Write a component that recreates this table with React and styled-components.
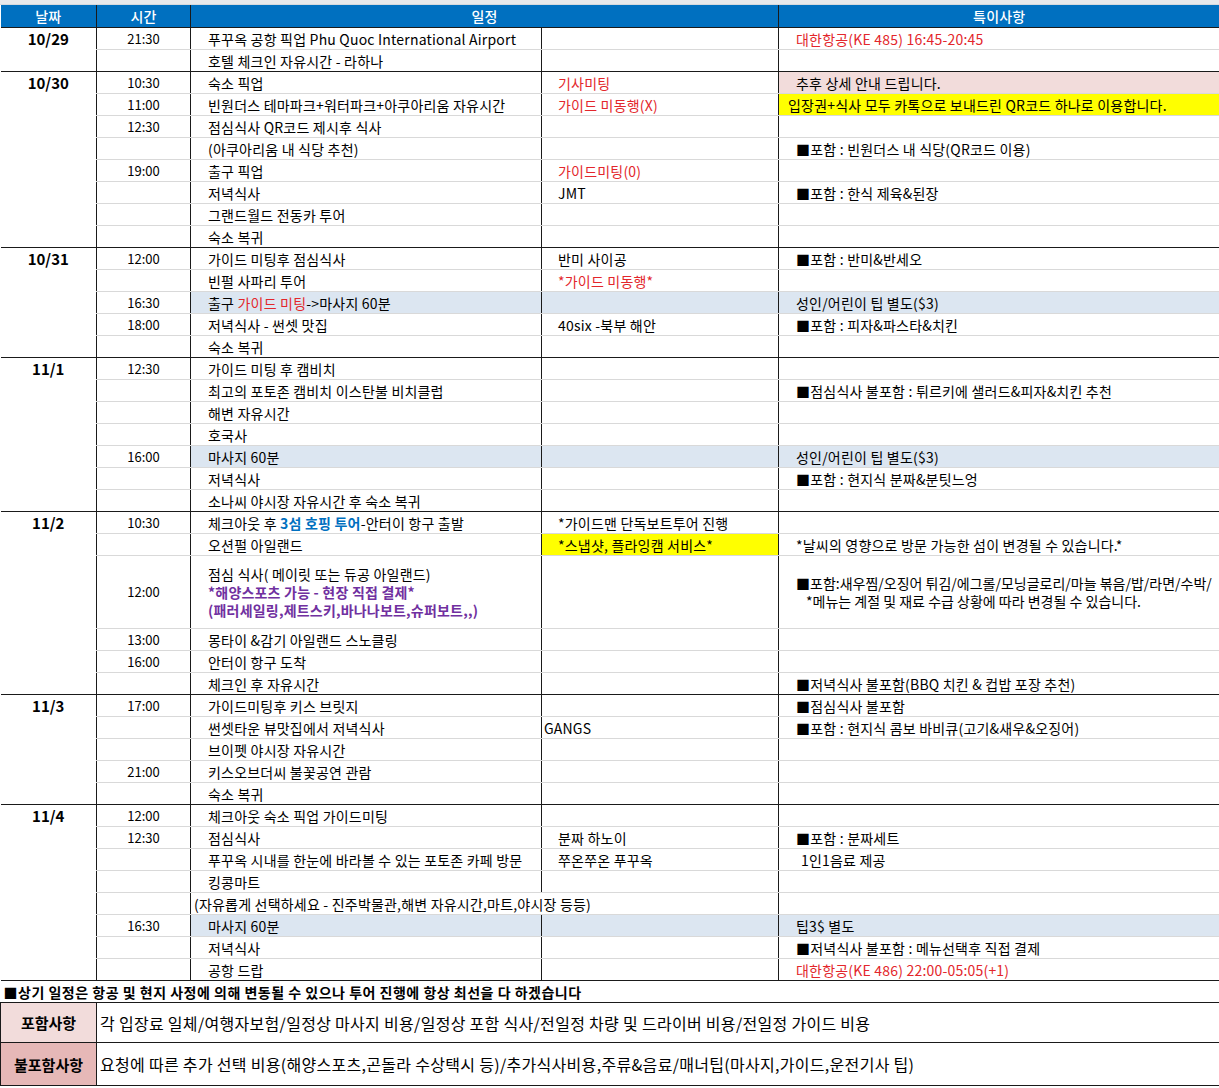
import React from "react";
import styled, { createGlobalStyle, css } from "styled-components";

const GlobalStyle = createGlobalStyle`
  body {
    margin: 0;
    background: #ffffff;
    font-family: "Noto Sans CJK KR", "Noto Sans", sans-serif;
    color: #000;
  }
`;

const Page = styled.div`
  width: 1219px;
`;

const TopStrip = styled.div`
  height: 4px;
  background: #e7e9ec;
  border-bottom: 1px solid #d6d9dd;
`;

const Table = styled.table`
  width: 1219px;
  border-collapse: collapse;
  table-layout: fixed;
  font-size: 14px;
  letter-spacing: 0.2px;
`;

const HeadCell = styled.th`
  height: 22px;
  padding: 0;
  background: #0070c0;
  color: #fff;
  font-weight: 500;
  font-size: 14px;
  line-height: 20px;
  text-align: center;
  border-left: 1px solid #1a1a1a;
  border-bottom: 1px solid #1a1a1a;
  &:first-child {
    border-left: none;
  }
`;

const lineColor = "#d9d9d9";

const Cell = styled.td`
  height: 21px;
  padding: 0 0 0 ${(p) => p.$pad ?? 17}px;
  line-height: 20px;
  white-space: nowrap;
  overflow: visible;
  vertical-align: middle;
  border-left: 1px solid #1a1a1a;
  border-bottom: 1px solid ${(p) => (p.$last ? "#1a1a1a" : lineColor)};
  background: ${(p) =>
    p.$bg === "blue"
      ? "#dce6f1"
      : p.$bg === "pink"
      ? "#f2dcdb"
      : p.$bg === "yellow"
      ? "#ffff00"
      : "transparent"};
  ${(p) =>
    p.$topBlack &&
    css`
      border-top: 1px solid #1a1a1a;
    `}
`;

const DateCell = styled.td`
  padding: 0;
  text-align: center;
  vertical-align: top;
  font-size: 15px;
  font-weight: 700;
  letter-spacing: 0;
  line-height: 22px;
  border-bottom: 1px solid #1a1a1a;
`;

const TimeCell = styled(Cell)`
  padding: 0;
  text-align: center;
  font-size: 13px;
  letter-spacing: 0;
`;

const Row = styled.tr`
  ${(p) =>
    p.$tall &&
    css`
      td {
        height: 72px;
        line-height: 18px;
      }
    `}
`;

const Red = styled.span`
  color: #e3262b;
`;

const Blue = styled.span`
  color: #0070c0;
  font-weight: 700;
`;

const Purple = styled.span`
  color: #7030a0;
  font-weight: 700;
`;

const Tight = styled.span`
  letter-spacing: 0;
`;

const Indent = styled.span`
  padding-left: 10px;
`;

const NoticeCell = styled.td`
  height: 21px;
  padding: 0 0 0 3px;
  font-weight: 700;
  letter-spacing: 0.5px;
  line-height: 20px;
  white-space: nowrap;
  border-top: 1px solid #1a1a1a;
  border-bottom: 1px solid #1a1a1a;
`;

const LabelCell = styled.td`
  height: ${(p) => p.$h}px;
  padding: 0;
  text-align: center;
  font-size: 15px;
  font-weight: 700;
  letter-spacing: 0;
  background: ${(p) => (p.$dark ? "#e6b8b7" : "#f2dcdb")};
  border-bottom: 1px solid #1a1a1a;
  border-left: 1px solid #1a1a1a;
`;

const InfoCell = styled.td`
  padding: 0 0 0 3px;
  font-size: 16px;
  letter-spacing: 0.3px;
  white-space: nowrap;
  border-left: 1px solid #1a1a1a;
  border-right: 1px solid #1a1a1a;
  border-bottom: 1px solid #1a1a1a;
`;

const days = [
  {
    date: "10/29",
    rows: [
      {
        time: "21:30",
        sched: "푸꾸옥 공항 픽업 Phu Quoc International Airport",
        remark: <Red>대한항공(KE 485) 16:45-20:45</Red>,
      },
      { sched: "호텔 체크인 자유시간 - 라하나" },
    ],
  },
  {
    date: "10/30",
    rows: [
      {
        time: "10:30",
        sched: "숙소 픽업",
        note: <Red>기사미팅</Red>,
        remark: "추후 상세 안내 드립니다.",
        remarkBg: "pink",
      },
      {
        time: "11:00",
        sched: "빈원더스 테마파크+워터파크+아쿠아리움 자유시간",
        note: <Red>가이드 미동행(X)</Red>,
        remark: "입장권+식사 모두 카톡으로 보내드린 QR코드 하나로 이용합니다.",
        remarkBg: "yellow",
        remarkPad: 9,
      },
      { time: "12:30", sched: "점심식사 QR코드 제시후 식사" },
      {
        sched: "(아쿠아리움 내 식당 추천)",
        remark: "■포함 : 빈원더스 내 식당(QR코드 이용)",
      },
      { time: "19:00", sched: "출구 픽업", note: <Red>가이드미팅(0)</Red> },
      { sched: "저녁식사", note: "JMT", remark: "■포함 : 한식 제육&된장" },
      { sched: "그랜드월드 전동카 투어" },
      { sched: "숙소 복귀" },
    ],
  },
  {
    date: "10/31",
    rows: [
      {
        time: "12:00",
        sched: "가이드 미팅후 점심식사",
        note: "반미 사이공",
        remark: "■포함 : 반미&반세오",
      },
      { sched: "빈펄 사파리 투어", note: <Red>*가이드 미동행*</Red> },
      {
        time: "16:30",
        sched: (
          <>
            출구 <Red>가이드 미팅</Red>-&gt;마사지 60분
          </>
        ),
        remark: "성인/어린이 팁 별도($3)",
        bg: "blue",
      },
      {
        time: "18:00",
        sched: "저녁식사 - 썬셋 맛집",
        note: "40six -북부 해안",
        remark: "■포함 : 피자&파스타&치킨",
      },
      { sched: "숙소 복귀" },
    ],
  },
  {
    date: "11/1",
    rows: [
      { time: "12:30", sched: "가이드 미팅 후 캠비치" },
      {
        sched: "최고의 포토존 캠비치 이스탄불 비치클럽",
        remark: "■점심식사 불포함 : 튀르키에 샐러드&피자&치킨 추천",
      },
      { sched: "해변 자유시간" },
      { sched: "호국사" },
      {
        time: "16:00",
        sched: "마사지 60분",
        remark: "성인/어린이 팁 별도($3)",
        bg: "blue",
      },
      { sched: "저녁식사", remark: "■포함 : 현지식 분짜&분팃느엉" },
      { sched: "소나씨 야시장 자유시간 후 숙소 복귀" },
    ],
  },
  {
    date: "11/2",
    rows: [
      {
        time: "10:30",
        sched: (
          <>
            체크아웃 후 <Blue>3섬 호핑 투어</Blue>-안터이 항구 출발
          </>
        ),
        note: "*가이드맨 단독보트투어 진행",
      },
      {
        sched: "오션펄 아일랜드",
        note: "*스냅샷, 플라잉캠 서비스*",
        noteBg: "yellow",
        remark: "*날씨의 영향으로 방문 가능한 섬이 변경될 수 있습니다.*",
      },
      {
        time: "12:00",
        tall: true,
        sched: (
          <>
            점심 식사( 메이릿 또는 듀공 아일랜드)
            <br />
            <Purple>*해양스포츠 가능 - 현장 직접 결제*</Purple>
            <br />
            <Purple>(패러세일링,제트스키,바나나보트,슈퍼보트,,)</Purple>
          </>
        ),
        remark: (
          <Tight>
            ■포함:새우찜/오징어 튀김/에그롤/모닝글로리/마늘 볶음/밥/라면/수박/
            <br />
            <Indent>*메뉴는 계절 및 재료 수급 상황에 따라 변경될 수 있습니다.</Indent>
          </Tight>
        ),
      },
      { time: "13:00", sched: "몽타이 &감기 아일랜드 스노클링" },
      { time: "16:00", sched: "안터이 항구 도착" },
      {
        sched: "체크인 후 자유시간",
        remark: "■저녁식사 불포함(BBQ 치킨 & 컵밥 포장 추천)",
      },
    ],
  },
  {
    date: "11/3",
    rows: [
      {
        time: "17:00",
        sched: "가이드미팅후 키스 브릿지",
        remark: "■점심식사 불포함",
      },
      {
        sched: "썬셋타운 뷰맛집에서 저녁식사",
        note: "GANGS",
        notePad: 2,
        remark: "■포함 : 현지식 콤보 바비큐(고기&새우&오징어)",
      },
      { sched: "브이펫 야시장 자유시간" },
      { time: "21:00", sched: "키스오브더씨 불꽃공연 관람" },
      { sched: "숙소 복귀" },
    ],
  },
  {
    date: "11/4",
    rows: [
      { time: "12:00", sched: "체크아웃 숙소 픽업 가이드미팅" },
      {
        time: "12:30",
        sched: "점심식사",
        note: "분짜 하노이",
        remark: "■포함 : 분짜세트",
      },
      {
        sched: "푸꾸옥 시내를 한눈에 바라볼 수 있는 포토존 카페 방문",
        note: "쭈온쭈온 푸꾸옥",
        remark: "1인1음료 제공",
        remarkPad: 22,
      },
      { sched: "킹콩마트" },
      {
        sched: "(자유롭게 선택하세요 - 진주박물관,해변 자유시간,마트,야시장 등등)",
        span: true,
      },
      { time: "16:30", sched: "마사지 60분", remark: "팁3$ 별도", bg: "blue" },
      { sched: "저녁식사", remark: "■저녁식사 불포함 : 메뉴선택후 직접 결제" },
      {
        sched: "공항 드랍",
        remark: <Red>대한항공(KE 486) 22:00-05:05(+1)</Red>,
        remarkTopBlack: true,
      },
    ],
  },
];

const DayGroup = ({ day }) => {
  const last = day.rows.length - 1;
  return (
    <tbody>
      {day.rows.map((r, i) => (
        <Row key={i} $tall={r.tall}>
          {i === 0 && <DateCell rowSpan={day.rows.length}>{day.date}</DateCell>}
          <TimeCell $last={i === last}>{r.time}</TimeCell>
          {r.span ? (
            <Cell colSpan={2} $pad={3} $last={i === last}>
              {r.sched}
            </Cell>
          ) : (
            <>
              <Cell $bg={r.bg} $last={i === last}>
                {r.sched}
              </Cell>
              <Cell
                $bg={r.noteBg || r.bg}
                $pad={r.notePad ?? 16}
                $last={i === last}
              >
                {r.note}
              </Cell>
            </>
          )}
          <Cell
            $bg={r.remarkBg || r.bg}
            $pad={r.remarkPad}
            $last={i === last}
            $topBlack={r.remarkTopBlack}
          >
            {r.remark}
          </Cell>
        </Row>
      ))}
    </tbody>
  );
};

export default function App() {
  return (
    <Page>
      <GlobalStyle />
      <TopStrip />
      <Table>
        <colgroup>
          <col style={{ width: 96 }} />
          <col style={{ width: 94 }} />
          <col style={{ width: 351 }} />
          <col style={{ width: 237 }} />
          <col style={{ width: 441 }} />
        </colgroup>
        <thead>
          <tr>
            <HeadCell>날짜</HeadCell>
            <HeadCell>시간</HeadCell>
            <HeadCell colSpan={2}>일정</HeadCell>
            <HeadCell>특이사항</HeadCell>
          </tr>
        </thead>
        {days.map((d) => (
          <DayGroup key={d.date} day={d} />
        ))}
        <tfoot>
          <tr>
            <NoticeCell colSpan={5}>
              ■상기 일정은 항공 및 현지 사정에 의해 변동될 수 있으나 투어 진행에
              항상 최선을 다 하겠습니다
            </NoticeCell>
          </tr>
          <tr>
            <LabelCell $h={39}>포함사항</LabelCell>
            <InfoCell colSpan={4}>
              각 입장료 일체/여행자보험/일정상 마사지 비용/일정상 포함 식사/전일정
              차량 및 드라이버 비용/전일정 가이드 비용
            </InfoCell>
          </tr>
          <tr>
            <LabelCell $h={42} $dark>
              불포함사항
            </LabelCell>
            <InfoCell colSpan={4}>
              요청에 따른 추가 선택 비용(해양스포츠,곤돌라 수상택시 등)/추가식사비용,주류&음료/매너팁(마사지,가이드,운전기사
              팁)
            </InfoCell>
          </tr>
        </tfoot>
      </Table>
    </Page>
  );
}
